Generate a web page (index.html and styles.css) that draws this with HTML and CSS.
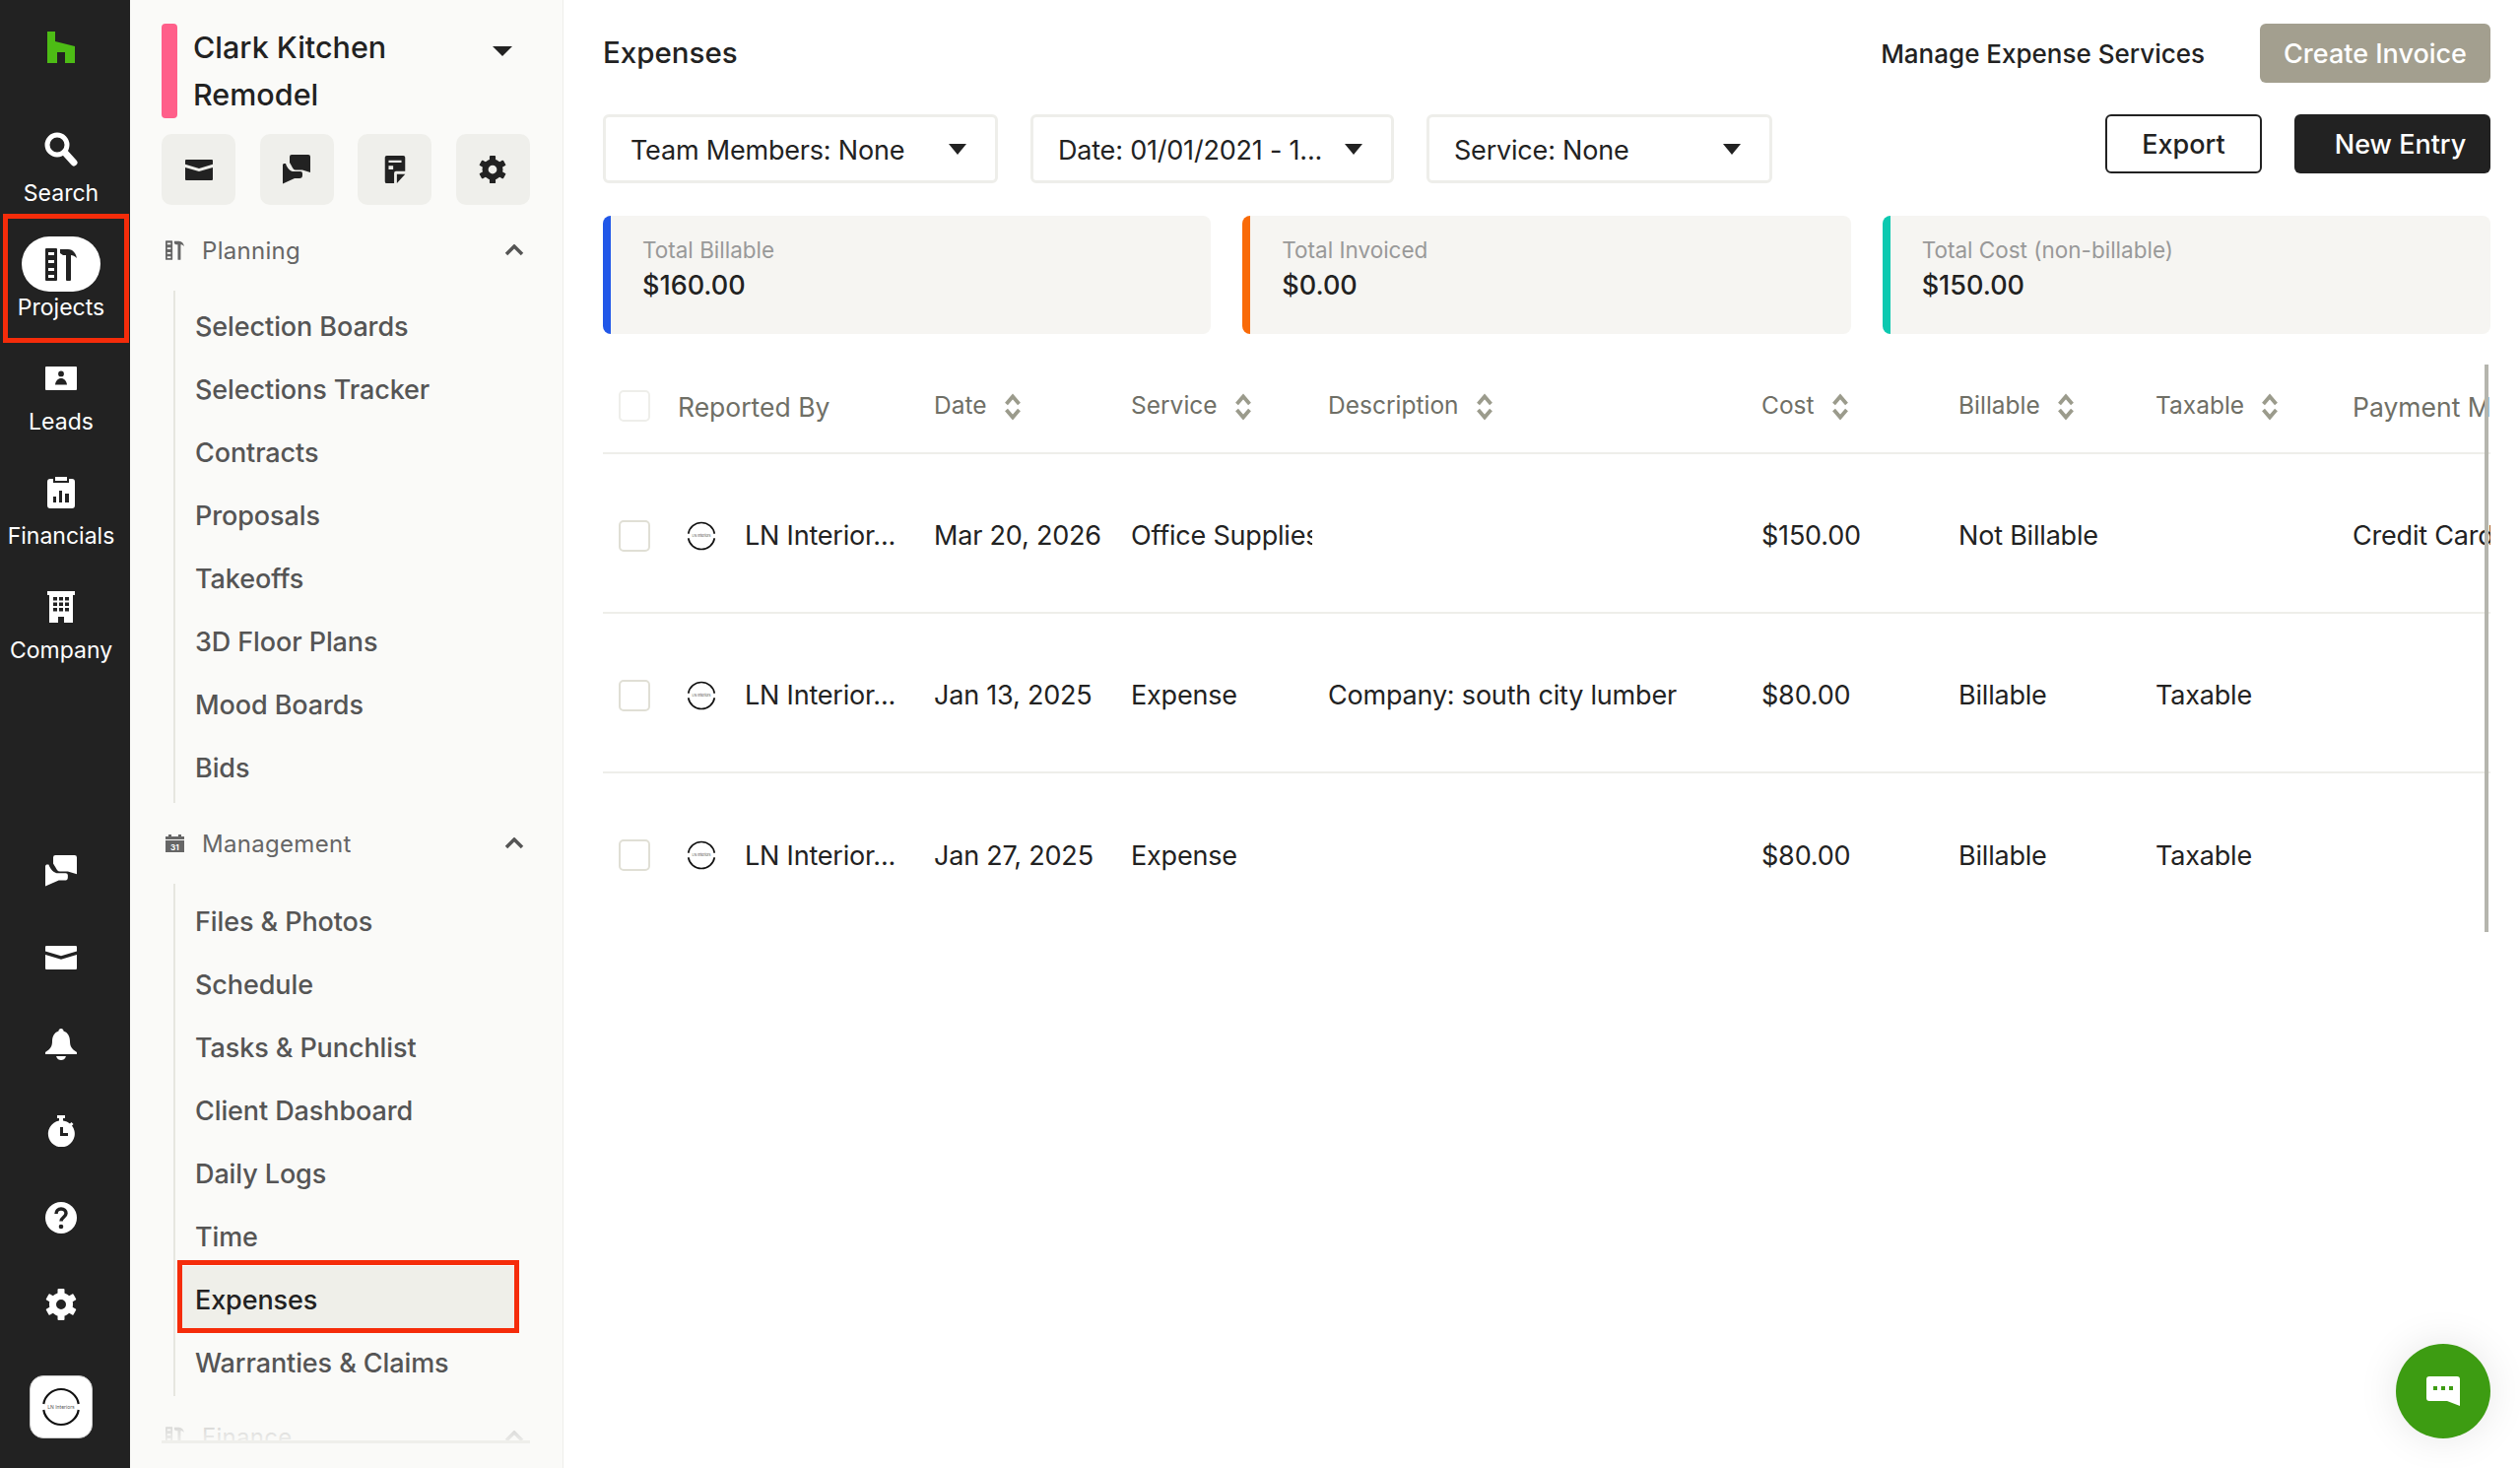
FILE: index.html

```html
<!DOCTYPE html>
<html lang="en">
<head>
  <meta charset="UTF-8" />
  <meta name="viewport" content="width=device-width, initial-scale=1.0" />
  <title>Expenses</title>
  <link rel="stylesheet" href="styles.css">
</head>
<body>
  <svg class="sprites" width="0" height="0">
    <symbol id="i-mail" viewBox="0 0 28 20" preserveAspectRatio="none"><path d="M1 0h26a1 1 0 0 1 1 1v3.500L14 8.500 0 4.500V1a1 1 0 0 1 1-1zM0 7.500l14 4 14-4V19a1 1 0 0 1-1 1H1a1 1 0 0 1-1-1z"/></symbol>
    <symbol id="i-chat" viewBox="0 0 28 30" preserveAspectRatio="none"><path d="M7 2a2 2 0 0 1 2-2h17a2 2 0 0 1 2 2v16l-8-2.500H13c-2 0-3-2-4-4L7 8z"/><path d="M1 9h2c1 3 3 7 7 8h8a2 2 0 0 1 2 2v2a3 3 0 0 1-3 3H12L0 29.500V10z"/></symbol>
    <symbol id="i-note" viewBox="0 0 22 30"><path d="M2 0h18a2 2 0 0 1 2 2v15H12a2 2 0 0 0-2 2v11H2a2 2 0 0 1-2-2V2a2 2 0 0 1 2-2zm2 5v2.500h14V5zm0 6v4h5v-4zM13 20h9l-9 10z" fill-rule="evenodd"/></symbol>
    <symbol id="i-gear" viewBox="0 0 32 32"><g><circle cx="16" cy="16" r="8.500" fill="none" stroke="currentColor" stroke-width="7"/><rect x="12.500" y="0" width="7" height="7" rx="1"/><rect x="12.500" y="25" width="7" height="7" rx="1"/><rect x="12.500" y="0" width="7" height="7" rx="1" transform="rotate(60 16 16)"/><rect x="12.500" y="0" width="7" height="7" rx="1" transform="rotate(120 16 16)"/><rect x="12.500" y="0" width="7" height="7" rx="1" transform="rotate(240 16 16)"/><rect x="12.500" y="0" width="7" height="7" rx="1" transform="rotate(300 16 16)"/></g></symbol>
    <symbol id="i-tools" viewBox="0 0 32 33"><path fill-rule="evenodd" d="M1 0h10a1 1 0 0 1 1 1v31a1 1 0 0 1-1 1H1a1 1 0 0 1-1-1V1a1 1 0 0 1 1-1zm2 4v3h6V4zm0 8v3h6v-3zm0 8v3h6v-3zm0 7v3h6v-3z"/><path d="M15 1h8c5 0 8 4 9 9-2-2-4-3-6-3v25a1 1 0 0 1-1 1h-3a1 1 0 0 1-1-1V7h-3l-3-2z"/></symbol>
    <symbol id="i-chev" viewBox="0 0 20 12"><path d="M2 10l8-8 8 8" fill="none" stroke="currentColor" stroke-width="3.500"/></symbol>
    <symbol id="i-sort" viewBox="0 0 18 28"><path d="M2.500 11l6.500-7.500 6.500 7.500M2.500 17l6.500 7.500 6.500-7.500" fill="none" stroke="currentColor" stroke-width="3.800"/></symbol>
    <symbol id="i-ring" viewBox="0 0 40 40"><path d="M2.250 17A18 18 0 0 1 37.750 17M37.750 23A18 18 0 0 1 2.250 23" fill="none" stroke="#111" stroke-width="2.200"/></symbol>
  </svg>

  <div class="app">
    <nav class="rail">
      <div class="rail-logo">
        <svg width="28" height="32" viewBox="0 0 28 32"><path fill="#4dbc15" d="M0 0h8v10l20 5v17H18V21h-8v11H0z"/></svg>
      </div>
      <a class="rail-item">
        <span class="rail-icon">
          <svg width="34" height="36" viewBox="0 0 34 36"><circle cx="13" cy="13" r="10" fill="none" stroke="#fff" stroke-width="5"/><path d="M21 21l9 10" stroke="#fff" stroke-width="7" stroke-linecap="round"/></svg>
        </span>
        <span>Search</span>
      </a>
      <a class="rail-item active">
        <span class="rail-icon pill"><svg width="32" height="33" class="ink"><use href="#i-tools"/></svg></span>
        <span>Projects</span>
      </a>
      <a class="rail-item">
        <span class="rail-icon">
          <svg width="32" height="24" viewBox="0 0 32 24"><path fill="#fff" fill-rule="evenodd" d="M1 0h30a1 1 0 0 1 1 1v22a1 1 0 0 1-1 1H1a1 1 0 0 1-1-1V1a1 1 0 0 1 1-1zm15 4.500a2.900 2.900 0 1 0 0 5.800 2.900 2.900 0 0 0 0-5.800zM10 18.500h12c-.5-4-3-6.500-6-6.500s-5.500 2.500-6 6.500z"/></svg>
        </span>
        <span>Leads</span>
      </a>
      <a class="rail-item">
        <span class="rail-icon">
          <svg width="28" height="32" viewBox="0 0 28 32"><path fill="#fff" fill-rule="evenodd" d="M3 2h3v4h16V2h3a3 3 0 0 1 3 3v24a3 3 0 0 1-3 3H3a3 3 0 0 1-3-3V5a3 3 0 0 1 3-3zm3 18v6h3v-6zm6-6v12h3V14zm6 3v9h4v-9z"/><path fill="#fff" d="M8 0h12v4H8z"/></svg>
        </span>
        <span>Financials</span>
      </a>
      <a class="rail-item">
        <span class="rail-icon">
          <svg width="28" height="32" viewBox="0 0 28 32"><path fill="#fff" fill-rule="evenodd" d="M0 0h28v4h-2v28H17v-6h-6v6H2V4H0zm6 6v3.500h4V6zm6 0v3.500h4V6zm6 0v3.500h4V6zM6 11.500V15h4v-3.500zm6 0V15h4v-3.500zm6 0V15h4v-3.500zM6 17v3.500h4V17zm6 0v3.500h4V17zm6 0v3.500h4V17z"/></svg>
        </span>
        <span>Company</span>
      </a>

      <div class="rail-tools">
        <span class="tool"><svg width="32" height="32"><use href="#i-chat"/></svg></span>
        <span class="tool"><svg width="32" height="24"><use href="#i-mail"/></svg></span>
        <span class="tool">
          <svg width="32" height="32" viewBox="0 0 32 32"><path d="M16 0c1.500 0 2.500 1 2.500 2.500C23 4 25 8 25 13c0 5 2 8 7 11v2H0v-2c5-3 7-6 7-11 0-5 2-9 6.500-10.500C13.500 1 14.500 0 16 0zM11 28h10c-1 3-3 4-5 4s-4-1-5-4z"/></svg>
        </span>
        <span class="tool">
          <svg width="28" height="32" viewBox="0 0 28 32"><path fill-rule="evenodd" d="M10 0h8v3h-2v2.500c3 .300 5 1.500 7 3l1.500-1.500 2 2L25 10.500A13.500 13.500 0 1 1 12 5.500V3h-2zM13 12v9h8v-3h-5v-6z"/></svg>
        </span>
        <span class="tool">
          <svg width="32" height="32" viewBox="0 0 32 32"><circle cx="16" cy="16" r="16"/><path d="M11 12c0-3 2-5 5-5s5 2 5 4.500c0 4-5 4-5 8" fill="none" stroke="#222" stroke-width="3.500"/><circle cx="16" cy="25" r="2.300" fill="#222"/></svg>
        </span>
        <span class="tool"><svg width="32" height="32"><use href="#i-gear"/></svg></span>
      </div>
      <div class="rail-avatar">
        <svg width="40" height="40" viewBox="0 0 40 40"><use href="#i-ring"/><text x="20" y="21.500" class="ring-name">LN Interiors</text></svg>
      </div>
    </nav>

    <aside class="panel">
      <div class="project">
        <span class="project-bar"></span>
        <h2 class="project-name">Clark Kitchen Remodel</h2>
        <span class="project-caret"></span>
      </div>
      <div class="quick">
        <a class="quick-btn"><svg width="28" height="21"><use href="#i-mail"/></svg></a>
        <a class="quick-btn"><svg width="28" height="30"><use href="#i-chat"/></svg></a>
        <a class="quick-btn"><svg width="22" height="28"><use href="#i-note"/></svg></a>
        <a class="quick-btn"><svg width="28" height="28"><use href="#i-gear"/></svg></a>
      </div>

      <div class="menu">
        <div class="menu-head first">
          <svg class="menu-icon" width="19" height="20"><use href="#i-tools"/></svg>
          <span>Planning</span>
          <svg class="menu-chev" width="20" height="12"><use href="#i-chev"/></svg>
        </div>
        <ul class="menu-list">
          <li>Selection Boards</li>
          <li>Selections Tracker</li>
          <li>Contracts</li>
          <li>Proposals</li>
          <li>Takeoffs</li>
          <li>3D Floor Plans</li>
          <li>Mood Boards</li>
          <li>Bids</li>
        </ul>

        <div class="menu-head">
          <svg class="menu-icon" width="19" height="18" viewBox="0 0 19 18"><path fill-rule="evenodd" d="M3 0h3v2h7V0h3v2h3v16H0V2h3zM0 5v1h19V5z"/><text x="9.500" y="15.500" class="cal-day">31</text></svg>
          <span>Management</span>
          <svg class="menu-chev" width="20" height="12"><use href="#i-chev"/></svg>
        </div>
        <ul class="menu-list lower">
          <li>Files &amp; Photos</li>
          <li>Schedule</li>
          <li>Tasks &amp; Punchlist</li>
          <li>Client Dashboard</li>
          <li>Daily Logs</li>
          <li>Time</li>
          <li class="current">Expenses</li>
          <li>Warranties &amp; Claims</li>
        </ul>

        <div class="menu-head">
          <svg class="menu-icon" width="19" height="20"><use href="#i-tools"/></svg>
          <span>Finance</span>
          <svg class="menu-chev" width="20" height="12"><use href="#i-chev"/></svg>
        </div>
        <div class="menu-fade"></div>
      </div>
    </aside>

    <main class="main">
      <div class="top-row">
        <h1>Expenses</h1>
        <a class="manage">Manage Expense Services</a>
        <button class="btn btn-muted">Create Invoice</button>
      </div>

      <div class="filter-row">
        <div class="filter f-team"><span>Team Members: None</span><i class="caret"></i></div>
        <div class="filter f-date"><span>Date: 01/01/2021 - 1...</span><i class="caret"></i></div>
        <div class="filter f-service"><span>Service: None</span><i class="caret"></i></div>
        <button class="btn btn-outline">Export</button>
        <button class="btn btn-dark">New Entry</button>
      </div>

      <div class="cards">
        <div class="card blue"><div class="card-label">Total Billable</div><div class="card-value">$160.00</div></div>
        <div class="card orange"><div class="card-label">Total Invoiced</div><div class="card-value">$0.00</div></div>
        <div class="card teal"><div class="card-label">Total Cost (non-billable)</div><div class="card-value">$150.00</div></div>
      </div>

      <div class="table-wrap">
        <table>
          <colgroup>
            <col class="c-check"><col class="c-rep"><col class="c-std"><col class="c-std"><col class="c-desc"><col class="c-std"><col class="c-std"><col class="c-std"><col class="c-std">
          </colgroup>
          <thead>
            <tr>
              <th><span class="check head"></span></th>
              <th class="plain">Reported By</th>
              <th>Date<svg class="sort" width="18" height="28"><use href="#i-sort"/></svg></th>
              <th>Service<svg class="sort" width="18" height="28"><use href="#i-sort"/></svg></th>
              <th>Description<svg class="sort" width="18" height="28"><use href="#i-sort"/></svg></th>
              <th>Cost<svg class="sort" width="18" height="28"><use href="#i-sort"/></svg></th>
              <th>Billable<svg class="sort" width="18" height="28"><use href="#i-sort"/></svg></th>
              <th>Taxable<svg class="sort" width="18" height="28"><use href="#i-sort"/></svg></th>
              <th class="plain">Payment Method</th>
            </tr>
          </thead>
          <tbody>
            <tr>
              <td><span class="check"></span></td>
              <td><div class="who"><svg width="30" height="30" viewBox="0 0 40 40"><use href="#i-ring"/><text x="20" y="21.500" class="ring-name">LN Interiors</text></svg>LN Interior...</div></td>
              <td>Mar 20, 2026</td>
              <td><div class="clip">Office Supplies</div></td>
              <td></td>
              <td>$150.00</td>
              <td>Not Billable</td>
              <td></td>
              <td>Credit Card</td>
            </tr>
            <tr>
              <td><span class="check"></span></td>
              <td><div class="who"><svg width="30" height="30" viewBox="0 0 40 40"><use href="#i-ring"/><text x="20" y="21.500" class="ring-name">LN Interiors</text></svg>LN Interior...</div></td>
              <td>Jan 13, 2025</td>
              <td><div class="clip">Expense</div></td>
              <td>Company: south city lumber</td>
              <td>$80.00</td>
              <td>Billable</td>
              <td>Taxable</td>
              <td></td>
            </tr>
            <tr>
              <td><span class="check"></span></td>
              <td><div class="who"><svg width="30" height="30" viewBox="0 0 40 40"><use href="#i-ring"/><text x="20" y="21.500" class="ring-name">LN Interiors</text></svg>LN Interior...</div></td>
              <td>Jan 27, 2025</td>
              <td><div class="clip">Expense</div></td>
              <td></td>
              <td>$80.00</td>
              <td>Billable</td>
              <td>Taxable</td>
              <td></td>
            </tr>
          </tbody>
        </table>
        <div class="scrollbar"></div>
      </div>

      <button class="chat-fab">
        <svg width="34" height="30" viewBox="0 0 34 30"><path fill="#fff" d="M3 0h28a3 3 0 0 1 3 3v27l-13-5H3a3 3 0 0 1-3-3V3a3 3 0 0 1 3-3z"/><rect x="7" y="10" width="4" height="4" fill="#3d9c12"/><rect x="15" y="10" width="4" height="4" fill="#3d9c12"/><rect x="23" y="10" width="4" height="4" fill="#3d9c12"/></svg>
      </button>
    </main>
  </div>
</body>
</html>
```

FILE: styles.css

```css
* { box-sizing: border-box; }
html, body { margin: 0; height: 100%; overflow: hidden; }
body { font-family: "Inter", "Liberation Sans", sans-serif; color: #222; background: #fff; }
.sprites { position: absolute; }
svg { fill: currentColor; display: block; }

.app { display: flex; height: 1490px; }

/* left rail */
.rail { width: 132px; flex: none; background: #222; color: #fff; display: flex; flex-direction: column; align-items: center; padding: 0 8px 30px 0; font-size: 23px; }
.rail-logo { height: 116px; padding-top: 32px; }
.rail-item { position: relative; width: 124px; height: 116px; padding-top: 8px; display: flex; flex-direction: column; align-items: center; line-height: 32px; }
.rail-icon { height: 56px; display: flex; align-items: center; justify-content: center; }
.rail-icon.pill { width: 80px; background: #fff; border-radius: 28px; }
.ink { color: #222; }
.rail-item.active::after { content: ""; position: absolute; top: -15px; bottom: 0; left: 3px; right: -7px; border: 5px solid #f52c0a; }
.rail-tools { margin-top: auto; display: flex; flex-direction: column; align-items: center; }
.tool { height: 88px; display: flex; align-items: center; }
.rail-avatar { margin-top: 28px; width: 64px; height: 64px; background: #fff; border: 1px solid #ccc; border-radius: 14px; display: flex; align-items: center; justify-content: center; }

/* project panel */
.panel { width: 440px; flex: none; background: #fafaf8; border-right: 1px solid #eeeeea; padding: 24px 33px 0 32px; }
.project { display: flex; height: 96px; }
.project-bar { width: 16px; flex: none; background: #ff5f8a; border-radius: 4px; }
.project-name { margin: 0 0 0 16px; width: 260px; font-size: 30.500px; line-height: 48px; font-weight: 500; }
.project-caret { margin: 23px 0 0 44px; border: 10px solid transparent; border-top-color: #222; border-bottom: 0; height: 10px; }
.quick { display: flex; justify-content: space-between; margin-top: 16px; }
.quick-btn { width: 75px; height: 72px; background: #efefeb; border-radius: 10px; display: flex; align-items: center; justify-content: center; }

.menu { position: relative; height: 1257px; overflow: hidden; border-bottom: 3px solid #efefeb; }
.menu-head { height: 52px; margin-top: 15px; display: flex; align-items: center; font-size: 24px; color: #666; letter-spacing: .3px; }
.menu-head.first { margin-top: 20px; }
.menu-icon { margin-left: 4px; width: 19px; }
.menu-head span { margin-left: 18px; flex: 1; }
.menu-chev { margin-right: 6px; color: #555; }
.menu-list { list-style: none; margin: 15px 0 0 12px; padding: 4px 0; border-left: 2px solid #e6e6e0; }
.menu-list li { position: relative; height: 64px; margin: 0 7px; padding: 1px 0 0 13px; width: 337px; font-size: 27px; letter-spacing: -.1px; line-height: 64px; font-weight: 500; color: #555; }
.menu-list.lower li { padding-top: 3px; }
.menu-list li.current { background: #efefe9; color: #222; }
.menu-list li.current::after { content: ""; position: absolute; inset: -6px -5px -4px -5px; border: 5px solid #f52c0a; }
.menu-fade { position: absolute; left: 0; right: 0; bottom: 0; height: 44px; background: linear-gradient(rgba(250,250,248,.5), rgba(250,250,248,.9)); }

/* main */
.main { position: relative; flex: 1; min-width: 0; padding: 24px 30px 0 40px; }
.top-row { display: flex; align-items: center; height: 60px; }
h1 { margin: -2px 0 0; flex: 1; font-size: 29.500px; font-weight: 500; }
.manage { font-size: 26px; font-weight: 500; margin-right: 56px; }
.btn { height: 60px; font: inherit; font-size: 27px; font-weight: 500; border-radius: 6px; border: 0; padding: 0; }
.btn-muted { width: 234px; background: #a39f8f; color: #fff; }
.btn-outline { width: 159px; background: #fff; border: 2px solid #222; color: #222; margin-left: auto; }
.btn-dark { width: 199px; background: #222; color: #fff; margin-left: 33px; padding-left: 16px; }

.filter-row { display: flex; align-items: flex-start; margin-top: 32px; }
.filter { height: 70px; border: 3px solid #eeeeea; border-radius: 6px; display: flex; align-items: center; justify-content: space-between; padding: 3px 29px 0 25px; font-size: 27px; letter-spacing: -.2px; margin-right: 33px; }
.f-team { width: 401px; }
.f-date { width: 369px; }
.f-service { width: 351px; margin-right: 0; }
.caret { border: 9px solid transparent; border-top: 11px solid #222; border-bottom: 0; margin-top: -3px; }

.cards { display: flex; gap: 32px; margin-top: 33px; }
.card { flex: 1; height: 120px; background: #f6f5f2; border-radius: 8px; border-left: 8px solid; padding: 20px 0 0 32px; }
.card.blue { border-color: #2157e8; }
.card.orange { border-color: #f96a08; }
.card.teal { border-color: #0cc9b0; }
.card-label { font-size: 22.500px; line-height: 30px; color: #999; }
.card-value { font-size: 27px; line-height: 40px; font-weight: 500; margin-top: 1px; }

.table-wrap { position: relative; margin-top: 31px; overflow: hidden; }
table { table-layout: fixed; width: 1960px; border-collapse: collapse; }
.c-check { width: 60px; }
.c-rep { width: 260px; }
.c-std { width: 200px; }
.c-desc { width: 440px; }
th { height: 90px; padding: 0 0 6px 16px; text-align: left; font-size: 24.500px; font-weight: 400; color: #6f6f66; border-bottom: 2px solid #eeeeea; white-space: nowrap; }
th svg.sort { display: inline-block; vertical-align: middle; margin-left: 17px; color: #9b9b8c; }
th.plain { font-size: 26.500px; padding-bottom: 4px; }
td { height: 162px; padding: 5px 0 0 16px; font-size: 27px; letter-spacing: -.2px; border-bottom: 2px solid #eeeeea; white-space: nowrap; overflow: hidden; }
tbody tr:last-child td { border-bottom: 0; }
.check { display: block; width: 32px; height: 32px; border: 2px solid #e0dfd5; border-radius: 5px; background: #fff; }
.check.head { border-color: #eeeeea; }
.who { display: flex; align-items: center; gap: 29px; margin-left: 9px; }
.clip { overflow: hidden; }
.scrollbar { position: absolute; right: 2px; top: 0; bottom: 0; width: 4px; background: #b5b5ad; }

.chat-fab { position: absolute; right: 30px; bottom: 30px; width: 96px; height: 96px; border-radius: 50%; border: 0; background: #3d9c12; display: flex; align-items: center; justify-content: center; box-shadow: 0 0 40px rgba(0,0,0,.1); }

text.cal-day { fill: #fff; font-size: 8px; font-weight: 700; text-anchor: middle; }
text.ring-name { fill: #555; font-size: 5px; text-anchor: middle; }
```
